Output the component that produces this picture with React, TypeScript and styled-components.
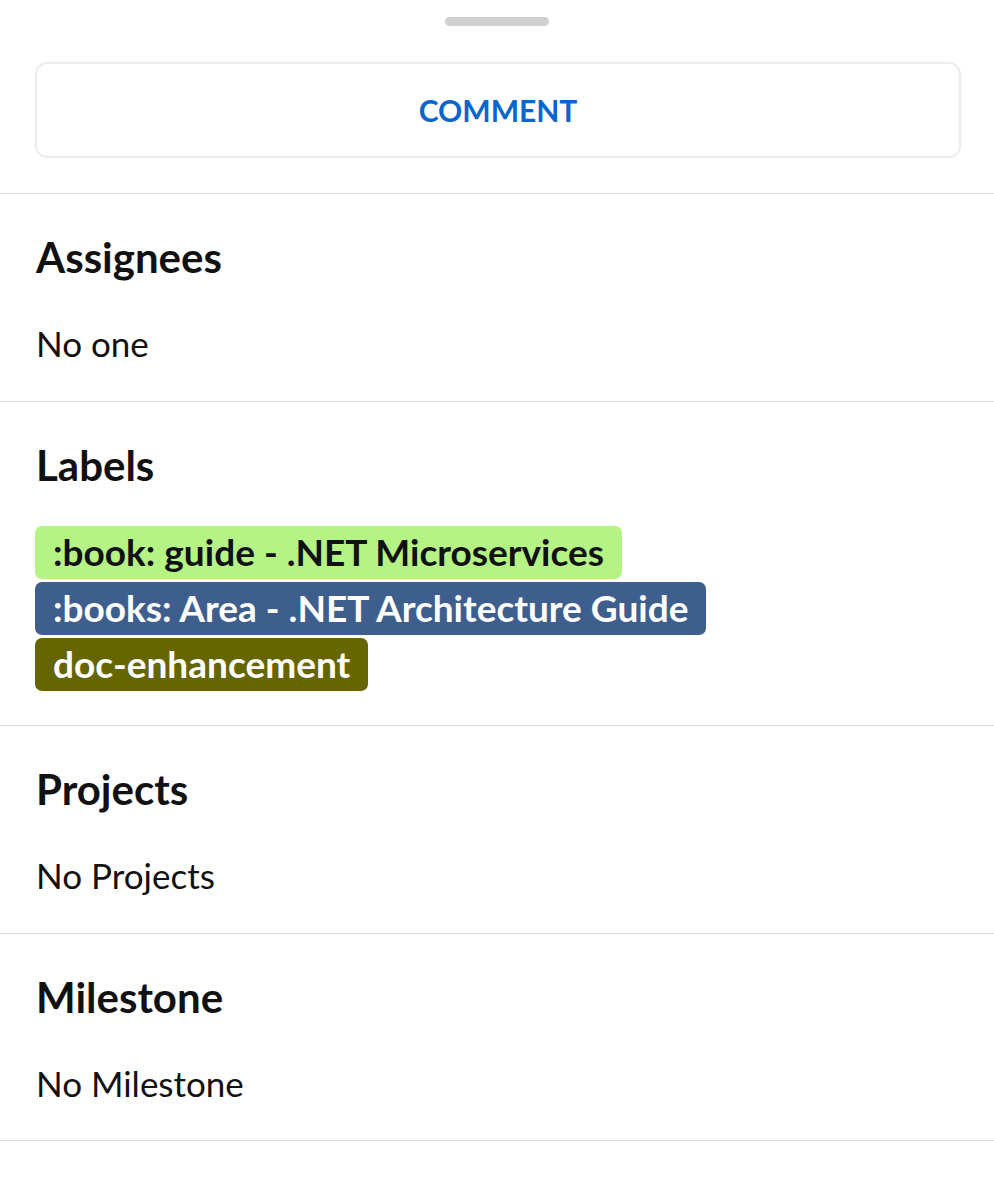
import React from "react";
import styled, { createGlobalStyle } from "styled-components";

const GlobalStyle = createGlobalStyle`
    body {
        margin: 0;
        background: #fff;
        font-family: Lato, "Open Sans", sans-serif;
        color: #111;
    }
`;

const Sheet = styled.div`
    width: 994px;
    background: #fff;
`;

const Handle = styled.div`
    width: 104px;
    height: 9px;
    margin: 17px auto 0;
    border-radius: 5px;
    background: #cfcfd2;
`;

const CommentButton = styled.button`
    display: block;
    box-sizing: border-box;
    width: 926px;
    height: 96px;
    margin: 36px 0 35px 35px;
    border: 2px solid #ececee;
    border-radius: 12px;
    background: #fff;
    color: #0a66cc;
    font-family: Lato, sans-serif;
    font-size: 30px;
    font-weight: 700;
    cursor: pointer;
`;

const Section = styled.section<{ $bottom?: number }>`
    border-top: 1px solid #dcdcdc;
    padding: 38px 36px ${(p) => p.$bottom ?? 37}px;
    &:last-child {
        border-bottom: 1px solid #dcdcdc;
    }
`;

const Heading = styled.h3`
    margin: 0;
    font-size: 42px;
    line-height: 50px;
    font-weight: 700;
    color: #111;
`;

const Value = styled.div`
    margin-top: 40px;
    font-size: 35px;
    line-height: 42px;
    color: #111;
`;

const LabelList = styled.div`
    display: flex;
    flex-direction: column;
    align-items: flex-start;
    gap: 3px;
    margin-top: 36px;
    margin-left: -1px;
`;

const Chip = styled.span<{ $bg: string; $fg: string }>`
    display: inline-flex;
    align-items: center;
    box-sizing: border-box;
    height: 53px;
    padding: 0 18px 2px;
    border-radius: 7px;
    background: ${(p) => p.$bg};
    color: ${(p) => p.$fg};
    font-size: 37px;
    font-weight: 700;
`;

const labels = [
    { name: ":book: guide - .NET Microservices", bg: "#b4f384", fg: "#111" },
    { name: ":books: Area - .NET Architecture Guide", bg: "#3e5f8e", fg: "#fff" },
    { name: "doc-enhancement", bg: "#666600", fg: "#fff" }
];

const App: React.FC = () => {
    return (
        <Sheet>
            <GlobalStyle />
            <Handle />
            <CommentButton>COMMENT</CommentButton>
            <Section>
                <Heading>Assignees</Heading>
                <Value>No one</Value>
            </Section>
            <Section $bottom={34}>
                <Heading>Labels</Heading>
                <LabelList>
                    {labels.map((l) => (
                        <Chip key={l.name} $bg={l.bg} $fg={l.fg}>
                            {l.name}
                        </Chip>
                    ))}
                </LabelList>
            </Section>
            <Section>
                <Heading>Projects</Heading>
                <Value>No Projects</Value>
            </Section>
            <Section $bottom={36}>
                <Heading>Milestone</Heading>
                <Value>No Milestone</Value>
            </Section>
        </Sheet>
    );
};

export default App;
